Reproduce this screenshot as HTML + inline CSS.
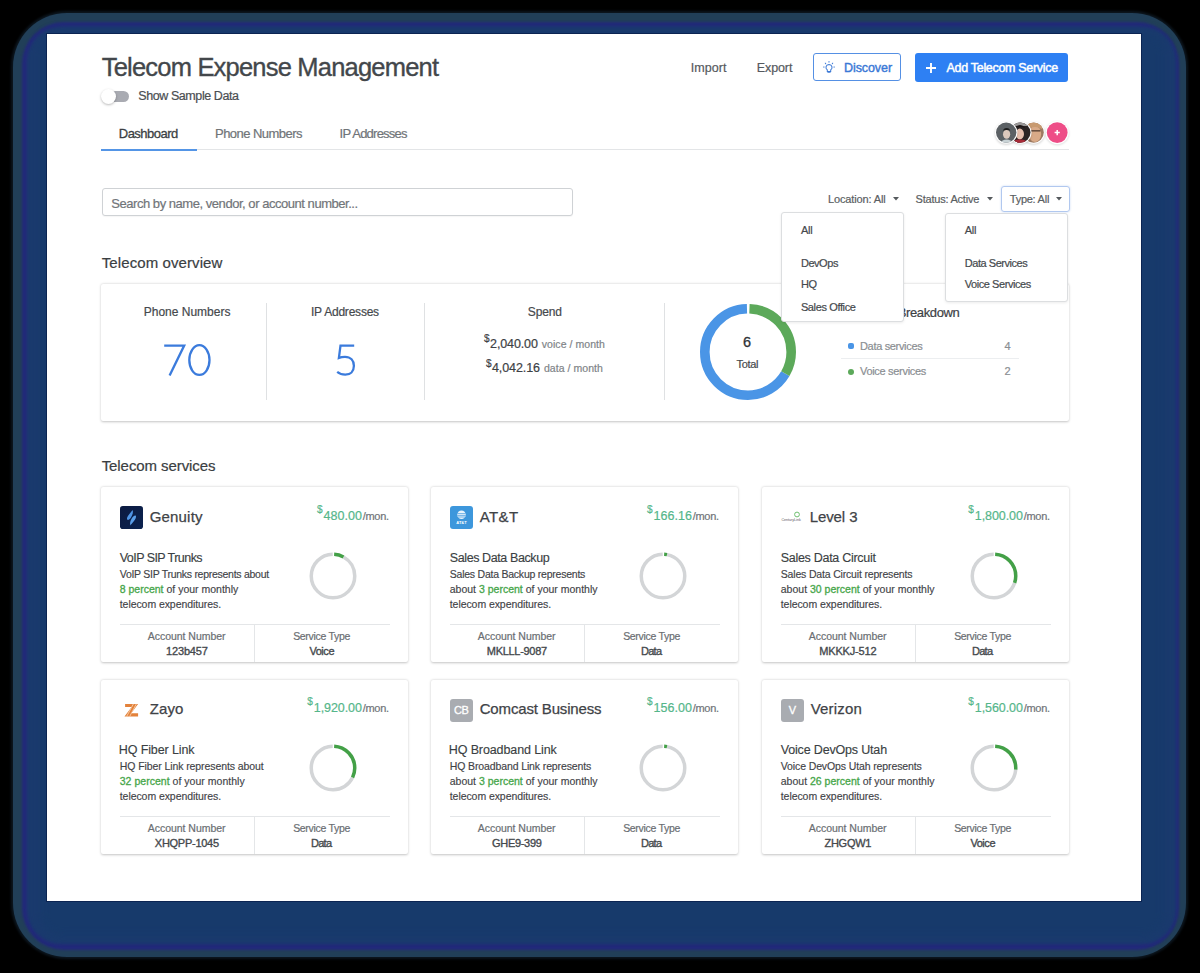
<!DOCTYPE html><html><head><meta charset="utf-8"><title>Telecom Expense Management</title><style>

html,body{margin:0;padding:0}
body{width:1200px;height:973px;position:relative;overflow:hidden;background:#000;font-family:"Liberation Sans", sans-serif}
.t{position:absolute;white-space:nowrap;line-height:1.117;-webkit-text-stroke-width:0.2px}
.t b.g{font-weight:400;color:#46a64a;-webkit-text-stroke:0.3px #46a64a}
.mon{font-size:11px;color:#6f7377;letter-spacing:-0.2px}
.card{position:absolute;background:#fff;border-radius:2px;box-shadow:0 0.5px 2.5px rgba(0,0,0,.24)}
.dd{position:absolute;background:#fff;border:1px solid #dcdee0;border-radius:3px;box-sizing:border-box;box-shadow:0 1px 3px rgba(0,0,0,.08)}
.lg{position:absolute;width:22.6px;height:22.5px;border-radius:3px;background:#a9acb1;color:#fff;font-size:11px;line-height:23px;text-align:center;letter-spacing:-0.3px;-webkit-text-stroke:0.3px #fff}

</style></head><body>
<div style="position:absolute;left:11px;top:11px;width:1177px;height:948px;border-radius:56px;background:rgba(33,63,88,.35);filter:blur(0.8px)"></div>
<div style="position:absolute;left:13px;top:13px;width:1173px;height:944px;border-radius:54px;background:#213f58;filter:blur(0.7px)"></div>
<div style="position:absolute;left:21.5px;top:21.5px;width:1157px;height:928.5px;border-radius:42px;background:#22297a;filter:blur(1.2px)"></div>
<div style="position:absolute;left:27px;top:27px;width:1148.5px;height:917px;border-radius:34px;background:#1a3a6e;filter:blur(1.5px)"></div>
<div style="position:absolute;left:40px;top:31px;width:1125px;height:905px;border-radius:20px;background:#173a6b;filter:blur(5px)"></div>
<div style="position:absolute;left:46px;top:33px;width:1096px;height:869px;background:#0b2452"></div>
<div style="position:absolute;left:47px;top:34px;width:1094px;height:867px;background:#fff"></div>
<div style="position:absolute;left:106px;top:90.5px;width:23px;height:11px;border-radius:6px;background:#a9abb2"></div>
<div style="position:absolute;left:101px;top:88.5px;width:15px;height:15px;border-radius:50%;background:#fff;box-shadow:0 1px 2.5px rgba(0,0,0,.28)"></div>
<div style="position:absolute;left:101px;top:149px;width:967.5px;height:1px;background:#e3e5e7"></div>
<div style="position:absolute;left:101px;top:148.5px;width:96px;height:2px;background:#5495e6"></div>
<svg style="position:absolute;left:990px;top:116px" width="84" height="34" viewBox="990 116 84 34">
<defs>
<clipPath id="a1"><circle cx="1006.2" cy="132.6" r="10.2"/></clipPath>
<clipPath id="a2"><circle cx="1020.3" cy="132.6" r="10.2"/></clipPath>
<clipPath id="a3"><circle cx="1033.6" cy="132.6" r="10.2"/></clipPath>
<filter id="sh" x="-30%" y="-30%" width="160%" height="160%"><feGaussianBlur stdDeviation="0.8"/></filter>
</defs>
<circle cx="1033.6" cy="133.6" r="11.2" fill="rgba(0,0,0,.18)" filter="url(#sh)"/>
<circle cx="1033.6" cy="132.6" r="11.2" fill="#fff"/>
<g clip-path="url(#a3)"><rect x="1022" y="121" width="24" height="24" fill="#9c7a62"/><ellipse cx="1035" cy="134" rx="6.2" ry="8" fill="#d9aa88"/><path d="M1028 124 Q1035 120 1042 125 L1042 129 Q1035 125 1028 129Z" fill="#c89a70"/><rect x="1029.5" y="130" width="11" height="1.6" fill="#6a5040"/></g>
<circle cx="1020.3" cy="133.6" r="11.2" fill="rgba(0,0,0,.18)" filter="url(#sh)"/>
<circle cx="1020.3" cy="132.6" r="11.2" fill="#fff"/>
<g clip-path="url(#a2)"><rect x="1009" y="121" width="24" height="24" fill="#2b2424"/><rect x="1009" y="121" width="24" height="5" fill="#9a9898"/><ellipse cx="1019.8" cy="134" rx="4.2" ry="5.4" fill="#e6c0ae"/><path d="M1014 131 Q1015 125 1020 125 Q1025 125 1026 131 L1025 128 Q1020 126 1015 128Z" fill="#1d1616"/><path d="M1011 145 Q1013 139 1020 139.5 Q1027 139 1029 145Z" fill="#a82a38"/></g>
<circle cx="1006.2" cy="133.6" r="11.2" fill="rgba(0,0,0,.18)" filter="url(#sh)"/>
<circle cx="1006.2" cy="132.6" r="11.2" fill="#fff"/>
<g clip-path="url(#a1)"><rect x="995" y="121" width="24" height="24" fill="#5b6064"/><ellipse cx="1006.6" cy="134.2" rx="3.6" ry="4.6" fill="#dcc8bc"/><path d="M1002.8 132 Q1003 128 1006.6 128 Q1010.2 128 1010.4 132 L1010 130.5 Q1006.6 129.5 1003.2 130.5Z" fill="#1e1e1e"/><path d="M999 145 Q1001 139.5 1006.6 139.5 Q1012 139.5 1014 145Z" fill="#c9d3d6"/></g>
<circle cx="1057.2" cy="133.4" r="11.6" fill="rgba(0,0,0,.15)" filter="url(#sh)"/>
<circle cx="1057.2" cy="132.6" r="11.6" fill="#fff"/>
<circle cx="1057.2" cy="132.6" r="10.4" fill="#ee4d87"/>
<path d="M1057.2 130 V135.2 M1054.6 132.6 H1059.8" stroke="#fff" stroke-width="1.5"/>
</svg>
<div style="position:absolute;left:813.3px;top:52.9px;width:88px;height:27.7px;box-sizing:border-box;border:1.6px solid #5590e4;border-radius:3px;background:#fff"></div>
<svg style="position:absolute;left:822.7px;top:61.3px" width="12" height="12" viewBox="0 0 12 12"><g fill="none" stroke="#3d7ad6" stroke-width="1.05" stroke-linecap="round"><path d="M4.3 8.9 Q2.7 7.8 3 5.9 Q3.5 3.6 6 3.5 Q8.5 3.6 9 5.9 Q9.3 7.8 7.7 8.9 V10.4 H4.3Z"/><path d="M6 0.6 V1.1 M2.3 2.2 L2.7 2.6 M9.7 2.2 L9.3 2.6 M0.6 6 H1.1 M10.9 6 H11.4"/><path d="M4.9 11.3 H7.1"/></g></svg>
<div style="position:absolute;left:914.6px;top:53px;width:153.8px;height:28.5px;border-radius:3px;background:#2e80f3"></div>
<svg style="position:absolute;left:925px;top:62px" width="12" height="12" viewBox="0 0 12 12"><path d="M6 1 V11 M1 6 H11" stroke="#fff" stroke-width="1.9"/></svg>
<div style="position:absolute;left:101.5px;top:188.2px;width:471px;height:28px;box-sizing:border-box;border:1px solid #cfd2d5;border-radius:3px;background:#fff;box-shadow:0 1px 1px rgba(0,0,0,.04)"></div>
<svg style="position:absolute;left:892.6px;top:197px" width="6" height="4" viewBox="0 0 6 4"><path d="M0 0 H6 L3 3.4Z" fill="#55595d"/></svg>
<svg style="position:absolute;left:986.6px;top:197px" width="6" height="4" viewBox="0 0 6 4"><path d="M0 0 H6 L3 3.4Z" fill="#55595d"/></svg>
<svg style="position:absolute;left:1055.6px;top:197px" width="6" height="4" viewBox="0 0 6 4"><path d="M0 0 H6 L3 3.4Z" fill="#55595d"/></svg>
<div style="position:absolute;left:1001px;top:186.2px;width:68.7px;height:25.5px;box-sizing:border-box;border:1.3px solid #b1c8ef;border-radius:3px;box-shadow:0 0 2px rgba(120,160,230,.45)"></div>
<div class="card" style="left:101px;top:283.5px;width:967.5px;height:137px"></div>
<div style="position:absolute;left:266.25px;top:302.5px;width:1px;height:97.5px;background:#dfe1e3"></div>
<div style="position:absolute;left:424.25px;top:302.5px;width:1px;height:97.5px;background:#dfe1e3"></div>
<div style="position:absolute;left:663.5px;top:302.5px;width:1px;height:97.5px;background:#dfe1e3"></div>
<svg style="position:absolute;left:697.8px;top:302px" width="100" height="100" viewBox="0 0 100 100"><g transform="rotate(-90 50 50)"><circle cx="50" cy="50" r="43.2" fill="none" stroke="#4a95e6" stroke-width="9.6" stroke-dasharray="179.46 271.43" stroke-dashoffset="-90.48"/><circle cx="50" cy="50" r="43.2" fill="none" stroke="#5ca95a" stroke-width="9.6" stroke-dasharray="88.98 271.43" stroke-dashoffset="-1.5"/></g></svg>
<svg style="position:absolute;left:150px;top:330px" width="220" height="60" viewBox="150 330 220 60"><g fill="none" stroke="#3b7bdc" stroke-width="2.3" stroke-linejoin="miter"><path d="M164.2 345.6 H184.2 L169.6 375.4"/><ellipse cx="199.4" cy="360.05" rx="10.1" ry="14.85"/><path d="M354.2 345.7 H340.5 L338.9 357.9 Q341.6 356.8 345 356.8 C350.6 356.8 353.9 360.6 353.9 365.8 C353.9 371.4 350.2 374.7 345.3 374.7 C341.6 374.7 339.0 373.4 337.2 371.9" stroke-linecap="butt"/></g></svg>
<div style="position:absolute;left:848.3px;top:343.2px;width:6px;height:6px;border-radius:2px;background:#4a95e6"></div>
<div style="position:absolute;left:848.3px;top:368.5px;width:6px;height:6px;border-radius:3px;background:#5ca95a"></div>
<div style="position:absolute;left:841px;top:358px;width:178px;height:1px;background:#eceef0"></div>
<div class="card" style="left:101px;top:486.5px;width:307.3px;height:175.5px"></div>
<div style="position:absolute;left:120px;top:624px;width:269.5px;height:1px;background:#e4e6e8"></div>
<div style="position:absolute;left:253.75px;top:624px;width:1px;height:37.5px;background:#e4e6e8"></div>
<svg style="position:absolute;left:307.25px;top:550.2px" width="52" height="52" viewBox="0 0 52 52"><g transform="rotate(-90 26 26)"><circle cx="26" cy="26" r="21.75" fill="none" stroke="#d3d5d7" stroke-width="3.5" stroke-dasharray="124.53 136.66" stroke-dashoffset="-10.93"/><circle cx="26" cy="26" r="21.75" fill="none" stroke="#43a047" stroke-width="3.5" stroke-dasharray="9.73 136.66" stroke-dashoffset="-1.20"/></g></svg>
<svg style="position:absolute;left:120.0px;top:505.8px" width="23" height="23" viewBox="0 0 23 23"><defs><linearGradient id="gg" x1="0" y1="0" x2="1" y2="1"><stop offset="0" stop-color="#0c1a40"/><stop offset="1" stop-color="#0b2350"/></linearGradient></defs><rect width="23" height="23" rx="2.8" fill="url(#gg)"/><path d="M12.6 4.0 C13.4 6.0 12.8 8.6 11.0 11.4 C9.8 13.2 8.0 14.6 7.2 13.6 C6.4 12.4 7.6 10.2 9.2 8.2 C10.6 6.4 12.0 5.0 12.6 4.0Z" fill="#4f94e4"/><path d="M10.4 19.4 C9.6 17.4 10.2 14.8 12.0 12.0 C13.2 10.2 15.0 8.8 15.8 9.8 C16.6 11.0 15.4 13.2 13.8 15.2 C12.4 17.0 11.0 18.4 10.4 19.4Z" fill="#5a9ee8"/></svg>
<div class="card" style="left:431px;top:486.5px;width:307.3px;height:175.5px"></div>
<div style="position:absolute;left:450px;top:624px;width:269.5px;height:1px;background:#e4e6e8"></div>
<div style="position:absolute;left:583.75px;top:624px;width:1px;height:37.5px;background:#e4e6e8"></div>
<svg style="position:absolute;left:637.25px;top:550.2px" width="52" height="52" viewBox="0 0 52 52"><g transform="rotate(-90 26 26)"><circle cx="26" cy="26" r="21.75" fill="none" stroke="#d3d5d7" stroke-width="3.5" stroke-dasharray="131.36 136.66" stroke-dashoffset="-4.10"/><circle cx="26" cy="26" r="21.75" fill="none" stroke="#43a047" stroke-width="3.5" stroke-dasharray="2.90 136.66" stroke-dashoffset="-1.20"/></g></svg>
<svg style="position:absolute;left:449.5px;top:505.9px" width="23" height="23" viewBox="0 0 23 23"><rect width="23" height="23" rx="3" fill="#3d97dc"/><circle cx="11.5" cy="8.7" r="4.3" fill="#eaf4fc"/><path d="M7.4 7.6 H15.6 M7.3 9.4 H15.7 M7.8 11 H15.2" stroke="#3d97dc" stroke-width="0.7"/><text x="11.5" y="18" font-family="Liberation Sans" font-size="4" font-weight="bold" fill="#ffffff" text-anchor="middle">AT&amp;T</text></svg>
<div class="card" style="left:762px;top:486.5px;width:307.3px;height:175.5px"></div>
<div style="position:absolute;left:781px;top:624px;width:269.5px;height:1px;background:#e4e6e8"></div>
<div style="position:absolute;left:914.75px;top:624px;width:1px;height:37.5px;background:#e4e6e8"></div>
<svg style="position:absolute;left:968.25px;top:550.2px" width="52" height="52" viewBox="0 0 52 52"><g transform="rotate(-90 26 26)"><circle cx="26" cy="26" r="21.75" fill="none" stroke="#d3d5d7" stroke-width="3.5" stroke-dasharray="94.46 136.66" stroke-dashoffset="-41.00"/><circle cx="26" cy="26" r="21.75" fill="none" stroke="#43a047" stroke-width="3.5" stroke-dasharray="39.80 136.66" stroke-dashoffset="-1.20"/></g></svg>
<svg style="position:absolute;left:780px;top:508px" width="26" height="16" viewBox="0 0 26 16"><circle cx="17" cy="6.5" r="2.4" fill="none" stroke="#6fbf6f" stroke-width="1"/><text x="1.5" y="13" font-family="Liberation Sans" font-size="3.6" fill="#555" >CenturyLink</text></svg>
<div class="card" style="left:101px;top:679.5px;width:307.3px;height:174px"></div>
<div style="position:absolute;left:120px;top:816px;width:269.5px;height:1px;background:#e4e6e8"></div>
<div style="position:absolute;left:253.75px;top:816px;width:1px;height:37.5px;background:#e4e6e8"></div>
<svg style="position:absolute;left:307.25px;top:742.2px" width="52" height="52" viewBox="0 0 52 52"><g transform="rotate(-90 26 26)"><circle cx="26" cy="26" r="21.75" fill="none" stroke="#d3d5d7" stroke-width="3.5" stroke-dasharray="91.73 136.66" stroke-dashoffset="-43.73"/><circle cx="26" cy="26" r="21.75" fill="none" stroke="#43a047" stroke-width="3.5" stroke-dasharray="42.53 136.66" stroke-dashoffset="-1.20"/></g></svg>
<svg style="position:absolute;left:121px;top:700px" width="20" height="20" viewBox="0 0 20 20"><defs><clipPath id="zc"><path d="M4.1 3.9 H17.1 L10.3 13.2 H17.1 V16.6 H3.5 L10.6 7.0 H4.1 Z"/></clipPath></defs><path d="M4.1 3.9 H17.1 L10.3 13.2 H17.1 V16.6 H3.5 L10.6 7.0 H4.1 Z" fill="#e3823b"/><g clip-path="url(#zc)" stroke="#fbdcc0" stroke-width="0.75"><path d="M12.6 3.5 L5.4 17"/><path d="M15.6 3.5 L8.4 17"/></g></svg>
<div class="card" style="left:431px;top:679.5px;width:307.3px;height:174px"></div>
<div style="position:absolute;left:450px;top:816px;width:269.5px;height:1px;background:#e4e6e8"></div>
<div style="position:absolute;left:583.75px;top:816px;width:1px;height:37.5px;background:#e4e6e8"></div>
<svg style="position:absolute;left:637.25px;top:742.2px" width="52" height="52" viewBox="0 0 52 52"><g transform="rotate(-90 26 26)"><circle cx="26" cy="26" r="21.75" fill="none" stroke="#d3d5d7" stroke-width="3.5" stroke-dasharray="131.36 136.66" stroke-dashoffset="-4.10"/><circle cx="26" cy="26" r="21.75" fill="none" stroke="#43a047" stroke-width="3.5" stroke-dasharray="2.90 136.66" stroke-dashoffset="-1.20"/></g></svg>
<div class="lg" style="left:450px;top:699px">CB</div>
<div class="card" style="left:762px;top:679.5px;width:307.3px;height:174px"></div>
<div style="position:absolute;left:781px;top:816px;width:269.5px;height:1px;background:#e4e6e8"></div>
<div style="position:absolute;left:914.75px;top:816px;width:1px;height:37.5px;background:#e4e6e8"></div>
<svg style="position:absolute;left:968.25px;top:742.2px" width="52" height="52" viewBox="0 0 52 52"><g transform="rotate(-90 26 26)"><circle cx="26" cy="26" r="21.75" fill="none" stroke="#d3d5d7" stroke-width="3.5" stroke-dasharray="99.93 136.66" stroke-dashoffset="-35.53"/><circle cx="26" cy="26" r="21.75" fill="none" stroke="#43a047" stroke-width="3.5" stroke-dasharray="34.33 136.66" stroke-dashoffset="-1.20"/></g></svg>
<div class="lg" style="left:781px;top:699px">V</div>
<div class="t" style="left:101.70px;top:53.00px;font-size:25.5px;color:#43474b;letter-spacing:-0.793px;-webkit-text-stroke:0.35px #43474b">Telecom Expense Management</div>
<div class="t" style="left:138.30px;top:90.30px;font-size:12.5px;color:#4a4e52;letter-spacing:-0.423px">Show Sample Data</div>
<div class="t" style="left:118.80px;top:126.50px;font-size:13px;color:#3b3f43;letter-spacing:-0.521px;-webkit-text-stroke:0.3px #3b3f43">Dashboard</div>
<div class="t" style="left:215.00px;top:126.50px;font-size:13px;color:#707478;letter-spacing:-0.537px">Phone Numbers</div>
<div class="t" style="left:339.60px;top:126.50px;font-size:13px;color:#707478;letter-spacing:-0.765px">IP Addresses</div>
<div class="t" style="left:690.70px;top:62.20px;font-size:12.5px;color:#55595d;letter-spacing:0.090px">Import</div>
<div class="t" style="left:756.80px;top:62.20px;font-size:12.5px;color:#55595d;letter-spacing:-0.111px">Export</div>
<div class="t" style="left:844.00px;top:62.25px;font-size:12.5px;color:#3a78d6;letter-spacing:-0.080px;-webkit-text-stroke:0.4px #3a78d6">Discover</div>
<div class="t" style="left:946.60px;top:62.20px;font-size:12.5px;color:#ffffff;letter-spacing:-0.315px;-webkit-text-stroke:0.45px #ffffff">Add Telecom Service</div>
<div class="t" style="left:111.30px;top:196.50px;font-size:13px;color:#717579;letter-spacing:-0.461px">Search by name, vendor, or account number...</div>
<div class="t" style="left:828.00px;top:192.80px;font-size:11px;color:#5a5e62;letter-spacing:-0.132px">Location: All</div>
<div class="t" style="left:915.60px;top:192.80px;font-size:11px;color:#5a5e62;letter-spacing:-0.226px">Status: Active</div>
<div class="t" style="left:1009.80px;top:192.80px;font-size:11px;color:#5a5e62;letter-spacing:-0.255px">Type: All</div>
<div class="t" style="left:101.75px;top:254.50px;font-size:15px;color:#3a3e42;letter-spacing:0.092px">Telecom overview</div>
<div class="t" style="left:143.75px;top:306.25px;font-size:12px;color:#45494d;letter-spacing:-0.005px">Phone Numbers</div>
<div class="t" style="left:311.00px;top:306.25px;font-size:12px;color:#45494d;letter-spacing:-0.215px">IP Addresses</div>
<div class="t" style="left:527.75px;top:306.35px;font-size:12px;color:#45494d;letter-spacing:-0.106px">Spend</div>
<div class="t" style="left:484.00px;top:333.30px;font-size:10px;color:#3d4145;letter-spacing:0.000px">$</div>
<div class="t" style="left:490.10px;top:337.50px;font-size:12.5px;color:#3d4145;letter-spacing:-0.129px">2,040.00</div>
<div class="t" style="left:541.75px;top:338.50px;font-size:10.5px;color:#808488;letter-spacing:0.062px">voice / month</div>
<div class="t" style="left:486.00px;top:357.80px;font-size:10px;color:#3d4145;letter-spacing:0.000px">$</div>
<div class="t" style="left:491.90px;top:362.00px;font-size:12.5px;color:#3d4145;letter-spacing:-0.086px">4,042.16</div>
<div class="t" style="left:543.90px;top:363.00px;font-size:10.5px;color:#808488;letter-spacing:0.052px">data / month</div>
<div class="t" style="left:743.00px;top:334.00px;font-size:14.5px;color:#2f3337;letter-spacing:0.000px;-webkit-text-stroke:0.3px #2f3337">6</div>
<div class="t" style="left:736.50px;top:358.10px;font-size:11px;color:#45494d;letter-spacing:-0.323px">Total</div>
<div class="t" style="left:853.97px;top:305.80px;font-size:13px;color:#3d4145;letter-spacing:-0.390px">Service Breakdown</div>
<div class="t" style="left:860.00px;top:340.20px;font-size:11px;color:#8a8e92;letter-spacing:-0.328px">Data services</div>
<div class="t" style="left:1004.40px;top:340.20px;font-size:11px;color:#8a8e92;letter-spacing:0.000px">4</div>
<div class="t" style="left:860.00px;top:364.60px;font-size:11px;color:#8a8e92;letter-spacing:-0.308px">Voice services</div>
<div class="t" style="left:1004.50px;top:364.60px;font-size:11px;color:#8a8e92;letter-spacing:0.000px">2</div>
<div class="t" style="left:101.70px;top:458.10px;font-size:15px;color:#3a3e42;letter-spacing:-0.082px">Telecom services</div>
<div class="t" style="left:149.70px;top:509.00px;font-size:15px;color:#3f4347;letter-spacing:0.184px;-webkit-text-stroke:0.25px #3f4347">Genuity</div>
<div class="t" style="left:362.70px;top:509.80px;font-size:11px;color:#6f7377;letter-spacing:-0.289px">/mon.</div>
<div class="t" style="left:323.50px;top:509.80px;font-size:12.5px;color:#55b68a;letter-spacing:0.044px">480.00</div>
<div class="t" style="left:316.90px;top:504.30px;font-size:10px;color:#55b68a;letter-spacing:0.000px">$</div>
<div class="t" style="left:119.75px;top:551.50px;font-size:12.5px;color:#3b3f43;letter-spacing:-0.553px;-webkit-text-stroke:0.15px #3b3f43">VoIP SIP Trunks</div>
<div class="t" style="left:119.75px;top:568.60px;font-size:10.5px;color:#3f4347;letter-spacing:-0.272px;-webkit-text-stroke:0.15px #3f4347">VoIP SIP Trunks represents about</div>
<div class="t" style="left:119.75px;top:583.60px;font-size:10.5px;color:#3f4347;letter-spacing:0.001px;-webkit-text-stroke:0.15px #3f4347"><b class="g">8 percent</b> of your monthly</div>
<div class="t" style="left:119.75px;top:598.60px;font-size:10.5px;color:#3f4347;letter-spacing:-0.065px;-webkit-text-stroke:0.15px #3f4347">telecom expenditures.</div>
<div class="t" style="left:147.78px;top:630.50px;font-size:10.5px;color:#6a6e72;letter-spacing:-0.035px">Account Number</div>
<div class="t" style="left:166.03px;top:644.50px;font-size:11px;color:#45494d;letter-spacing:-0.159px;-webkit-text-stroke:0.35px #45494d">123b457</div>
<div class="t" style="left:293.15px;top:630.50px;font-size:10.5px;color:#6a6e72;letter-spacing:-0.305px">Service Type</div>
<div class="t" style="left:309.40px;top:644.50px;font-size:11px;color:#45494d;letter-spacing:-0.448px;-webkit-text-stroke:0.35px #45494d">Voice</div>
<div class="t" style="left:479.70px;top:509.00px;font-size:15px;color:#3f4347;letter-spacing:0.414px;-webkit-text-stroke:0.25px #3f4347">AT&amp;T</div>
<div class="t" style="left:692.70px;top:509.80px;font-size:11px;color:#6f7377;letter-spacing:-0.289px">/mon.</div>
<div class="t" style="left:653.50px;top:509.80px;font-size:12.5px;color:#55b68a;letter-spacing:0.044px">166.16</div>
<div class="t" style="left:646.90px;top:504.30px;font-size:10px;color:#55b68a;letter-spacing:0.000px">$</div>
<div class="t" style="left:449.75px;top:551.50px;font-size:12.5px;color:#3b3f43;letter-spacing:-0.397px;-webkit-text-stroke:0.15px #3b3f43">Sales Data Backup</div>
<div class="t" style="left:449.75px;top:568.60px;font-size:10.5px;color:#3f4347;letter-spacing:-0.232px;-webkit-text-stroke:0.15px #3f4347">Sales Data Backup represents</div>
<div class="t" style="left:449.75px;top:583.60px;font-size:10.5px;color:#3f4347;letter-spacing:0.003px;-webkit-text-stroke:0.15px #3f4347">about <b class="g">3 percent</b> of your monthly</div>
<div class="t" style="left:449.75px;top:598.60px;font-size:10.5px;color:#3f4347;letter-spacing:-0.065px;-webkit-text-stroke:0.15px #3f4347">telecom expenditures.</div>
<div class="t" style="left:477.77px;top:630.50px;font-size:10.5px;color:#6a6e72;letter-spacing:-0.035px">Account Number</div>
<div class="t" style="left:486.80px;top:644.50px;font-size:11px;color:#45494d;letter-spacing:-0.297px;-webkit-text-stroke:0.35px #45494d">MKLLL-9087</div>
<div class="t" style="left:623.15px;top:630.50px;font-size:10.5px;color:#6a6e72;letter-spacing:-0.305px">Service Type</div>
<div class="t" style="left:640.90px;top:644.50px;font-size:11px;color:#45494d;letter-spacing:-0.706px;-webkit-text-stroke:0.35px #45494d">Data</div>
<div class="t" style="left:809.70px;top:509.00px;font-size:15px;color:#3f4347;letter-spacing:-0.088px;-webkit-text-stroke:0.25px #3f4347">Level 3</div>
<div class="t" style="left:1023.70px;top:509.80px;font-size:11px;color:#6f7377;letter-spacing:-0.289px">/mon.</div>
<div class="t" style="left:974.80px;top:509.80px;font-size:12.5px;color:#55b68a;letter-spacing:-0.072px">1,800.00</div>
<div class="t" style="left:968.20px;top:504.30px;font-size:10px;color:#55b68a;letter-spacing:0.000px">$</div>
<div class="t" style="left:780.75px;top:551.50px;font-size:12.5px;color:#3b3f43;letter-spacing:-0.286px;-webkit-text-stroke:0.15px #3b3f43">Sales Data Circuit</div>
<div class="t" style="left:780.75px;top:568.60px;font-size:10.5px;color:#3f4347;letter-spacing:-0.172px;-webkit-text-stroke:0.15px #3f4347">Sales Data Circuit represents</div>
<div class="t" style="left:780.75px;top:583.60px;font-size:10.5px;color:#3f4347;letter-spacing:0.008px;-webkit-text-stroke:0.15px #3f4347">about <b class="g">30 percent</b> of your monthly</div>
<div class="t" style="left:780.75px;top:598.60px;font-size:10.5px;color:#3f4347;letter-spacing:-0.065px;-webkit-text-stroke:0.15px #3f4347">telecom expenditures.</div>
<div class="t" style="left:808.77px;top:630.50px;font-size:10.5px;color:#6a6e72;letter-spacing:-0.035px">Account Number</div>
<div class="t" style="left:819.27px;top:644.50px;font-size:11px;color:#45494d;letter-spacing:-0.165px;-webkit-text-stroke:0.35px #45494d">MKKKJ-512</div>
<div class="t" style="left:954.15px;top:630.50px;font-size:10.5px;color:#6a6e72;letter-spacing:-0.305px">Service Type</div>
<div class="t" style="left:971.90px;top:644.50px;font-size:11px;color:#45494d;letter-spacing:-0.706px;-webkit-text-stroke:0.35px #45494d">Data</div>
<div class="t" style="left:149.70px;top:701.00px;font-size:15px;color:#3f4347;letter-spacing:0.098px;-webkit-text-stroke:0.25px #3f4347">Zayo</div>
<div class="t" style="left:362.70px;top:701.80px;font-size:11px;color:#6f7377;letter-spacing:-0.289px">/mon.</div>
<div class="t" style="left:313.80px;top:701.80px;font-size:12.5px;color:#55b68a;letter-spacing:-0.072px">1,920.00</div>
<div class="t" style="left:307.20px;top:696.30px;font-size:10px;color:#55b68a;letter-spacing:0.000px">$</div>
<div class="t" style="left:118.75px;top:743.50px;font-size:12.5px;color:#3b3f43;letter-spacing:-0.105px;-webkit-text-stroke:0.15px #3b3f43">HQ Fiber Link</div>
<div class="t" style="left:119.75px;top:760.60px;font-size:10.5px;color:#3f4347;letter-spacing:-0.089px;-webkit-text-stroke:0.15px #3f4347">HQ Fiber Link represents about</div>
<div class="t" style="left:119.75px;top:775.60px;font-size:10.5px;color:#3f4347;letter-spacing:0.025px;-webkit-text-stroke:0.15px #3f4347"><b class="g">32 percent</b> of your monthly</div>
<div class="t" style="left:119.75px;top:790.60px;font-size:10.5px;color:#3f4347;letter-spacing:-0.065px;-webkit-text-stroke:0.15px #3f4347">telecom expenditures.</div>
<div class="t" style="left:147.78px;top:822.50px;font-size:10.5px;color:#6a6e72;letter-spacing:-0.035px">Account Number</div>
<div class="t" style="left:154.85px;top:836.50px;font-size:11px;color:#45494d;letter-spacing:-0.270px;-webkit-text-stroke:0.35px #45494d">XHQPP-1045</div>
<div class="t" style="left:293.15px;top:822.50px;font-size:10.5px;color:#6a6e72;letter-spacing:-0.305px">Service Type</div>
<div class="t" style="left:310.90px;top:836.50px;font-size:11px;color:#45494d;letter-spacing:-0.706px;-webkit-text-stroke:0.35px #45494d">Data</div>
<div class="t" style="left:479.70px;top:701.00px;font-size:15px;color:#3f4347;letter-spacing:-0.154px;-webkit-text-stroke:0.25px #3f4347">Comcast Business</div>
<div class="t" style="left:692.70px;top:701.80px;font-size:11px;color:#6f7377;letter-spacing:-0.289px">/mon.</div>
<div class="t" style="left:653.50px;top:701.80px;font-size:12.5px;color:#55b68a;letter-spacing:0.044px">156.00</div>
<div class="t" style="left:646.90px;top:696.30px;font-size:10px;color:#55b68a;letter-spacing:0.000px">$</div>
<div class="t" style="left:448.75px;top:743.50px;font-size:12.5px;color:#3b3f43;letter-spacing:-0.109px;-webkit-text-stroke:0.15px #3b3f43">HQ Broadband Link</div>
<div class="t" style="left:449.75px;top:760.60px;font-size:10.5px;color:#3f4347;letter-spacing:-0.118px;-webkit-text-stroke:0.15px #3f4347">HQ Broadband Link represents</div>
<div class="t" style="left:449.75px;top:775.60px;font-size:10.5px;color:#3f4347;letter-spacing:0.003px;-webkit-text-stroke:0.15px #3f4347">about <b class="g">3 percent</b> of your monthly</div>
<div class="t" style="left:449.75px;top:790.60px;font-size:10.5px;color:#3f4347;letter-spacing:-0.065px;-webkit-text-stroke:0.15px #3f4347">telecom expenditures.</div>
<div class="t" style="left:477.77px;top:822.50px;font-size:10.5px;color:#6a6e72;letter-spacing:-0.035px">Account Number</div>
<div class="t" style="left:492.10px;top:836.50px;font-size:11px;color:#45494d;letter-spacing:-0.322px;-webkit-text-stroke:0.35px #45494d">GHE9-399</div>
<div class="t" style="left:623.15px;top:822.50px;font-size:10.5px;color:#6a6e72;letter-spacing:-0.305px">Service Type</div>
<div class="t" style="left:640.90px;top:836.50px;font-size:11px;color:#45494d;letter-spacing:-0.706px;-webkit-text-stroke:0.35px #45494d">Data</div>
<div class="t" style="left:810.70px;top:701.00px;font-size:15px;color:#3f4347;letter-spacing:0.185px;-webkit-text-stroke:0.25px #3f4347">Verizon</div>
<div class="t" style="left:1023.70px;top:701.80px;font-size:11px;color:#6f7377;letter-spacing:-0.289px">/mon.</div>
<div class="t" style="left:974.80px;top:701.80px;font-size:12.5px;color:#55b68a;letter-spacing:-0.072px">1,560.00</div>
<div class="t" style="left:968.20px;top:696.30px;font-size:10px;color:#55b68a;letter-spacing:0.000px">$</div>
<div class="t" style="left:780.75px;top:743.50px;font-size:12.5px;color:#3b3f43;letter-spacing:-0.171px;-webkit-text-stroke:0.15px #3b3f43">Voice DevOps Utah</div>
<div class="t" style="left:780.75px;top:760.60px;font-size:10.5px;color:#3f4347;letter-spacing:-0.115px;-webkit-text-stroke:0.15px #3f4347">Voice DevOps Utah represents</div>
<div class="t" style="left:780.75px;top:775.60px;font-size:10.5px;color:#3f4347;letter-spacing:0.008px;-webkit-text-stroke:0.15px #3f4347">about <b class="g">26 percent</b> of your monthly</div>
<div class="t" style="left:780.75px;top:790.60px;font-size:10.5px;color:#3f4347;letter-spacing:-0.065px;-webkit-text-stroke:0.15px #3f4347">telecom expenditures.</div>
<div class="t" style="left:808.77px;top:822.50px;font-size:10.5px;color:#6a6e72;letter-spacing:-0.035px">Account Number</div>
<div class="t" style="left:824.50px;top:836.50px;font-size:11px;color:#45494d;letter-spacing:-0.272px;-webkit-text-stroke:0.35px #45494d">ZHGQW1</div>
<div class="t" style="left:954.15px;top:822.50px;font-size:10.5px;color:#6a6e72;letter-spacing:-0.305px">Service Type</div>
<div class="t" style="left:970.40px;top:836.50px;font-size:11px;color:#45494d;letter-spacing:-0.448px;-webkit-text-stroke:0.35px #45494d">Voice</div>
<div class="dd" style="left:781.4px;top:212.2px;width:123px;height:110px"></div>
<div class="dd" style="left:945px;top:212.6px;width:123px;height:89.2px"></div>
<div class="t" style="left:800.90px;top:223.70px;font-size:11px;color:#45494d;letter-spacing:-0.220px">All</div>
<div class="t" style="left:800.90px;top:257.30px;font-size:11px;color:#45494d;letter-spacing:-0.447px">DevOps</div>
<div class="t" style="left:800.90px;top:278.30px;font-size:11px;color:#45494d;letter-spacing:-0.220px">HQ</div>
<div class="t" style="left:800.90px;top:300.50px;font-size:11px;color:#45494d;letter-spacing:-0.371px">Sales Office</div>
<div class="t" style="left:964.75px;top:223.60px;font-size:11px;color:#45494d;letter-spacing:-0.220px">All</div>
<div class="t" style="left:964.75px;top:257.40px;font-size:11px;color:#45494d;letter-spacing:-0.456px">Data Services</div>
<div class="t" style="left:964.75px;top:278.40px;font-size:11px;color:#45494d;letter-spacing:-0.434px">Voice Services</div>
</body></html>
